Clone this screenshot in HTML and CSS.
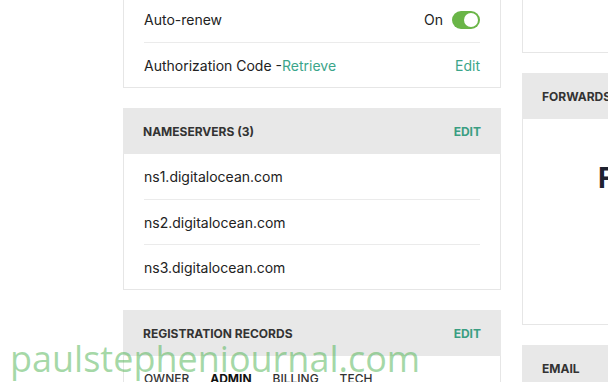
FILE: index.html
```html
<!DOCTYPE html>
<html lang="en">
<head>
  <meta charset="UTF-8">
  <meta name="viewport" content="width=device-width, initial-scale=1.0">
  <title>Domain Settings</title>
  <link rel="stylesheet" href="styles.css">
</head>
<body>
  <div class="page">
    <div class="column">
      <!-- Settings -->
      <div class="card">
        <div class="row">
          <span>Auto-renew</span>
          <span class="toggle-wrap">On <span class="toggle"><span class="knob"></span></span></span>
        </div>
        <div class="row">
          <span>Authorization Code -<a class="link" href="#">Retrieve</a></span>
          <a class="link" href="#">Edit</a>
        </div>
      </div>

      <!-- Nameservers -->
      <div class="card">
        <div class="card-header">
          <span>Nameservers (3)</span>
          <a class="header-link" href="#">Edit</a>
        </div>
        <div class="row">ns1.digitalocean.com</div>
        <div class="row">ns2.digitalocean.com</div>
        <div class="row">ns3.digitalocean.com</div>
      </div>

      <!-- Registration records -->
      <div class="card">
        <div class="card-header">
          <span>Registration Records</span>
          <a class="header-link" href="#">Edit</a>
        </div>
        <div class="tabs">
          <span class="tab">Owner</span>
          <span class="tab active">Admin</span>
          <span class="tab">Billing</span>
          <span class="tab">Tech</span>
        </div>
      </div>
    </div>

    <div class="column">
      <div class="card blank"></div>

      <div class="card">
        <div class="card-header">
          <span>Forwards</span>
        </div>
        <div class="forwards-body">
          <h2 class="big-title">Free Forwarding</h2>
        </div>
      </div>

      <div class="card">
        <div class="card-header">
          <span>Email</span>
        </div>
        <div class="forwards-body short"></div>
      </div>
    </div>
  </div>

  <div class="watermark">paulstepheniournal.com</div>
</body>
</html>
```

FILE: styles.css
```css
body {
  margin: 0;
  padding: 0;
  background: #ffffff;
  font-family: 'Inter', 'Roboto', sans-serif;
  color: #222;
  overflow: hidden;
  position: relative;
  height: 100vh;
}

.page {
  display: flex;
  gap: 21px;
  padding-left: 123px;
  margin-top: -4px;
}

.column {
  width: 378px;
  flex-shrink: 0;
  display: flex;
  flex-direction: column;
  gap: 20px;
}

.card {
  border: 1px solid #e6e6e6;
  background: #fff;
}

.card.blank {
  height: 55px;
}

.row {
  height: 45px;
  box-sizing: border-box;
  margin: 0 20px;
  display: flex;
  align-items: center;
  justify-content: space-between;
  font-size: 14px;
  color: #222;
}

.row + .row {
  border-top: 1px solid #ebebeb;
}

.link {
  color: #3ba58a;
  text-decoration: none;
}

.toggle-wrap {
  display: flex;
  align-items: center;
  gap: 9px;
}

.toggle {
  width: 28px;
  height: 18px;
  border-radius: 9px;
  background: #6ab547;
  display: flex;
  align-items: center;
  justify-content: flex-end;
  padding: 0 2px;
  box-sizing: border-box;
}

.knob {
  width: 14px;
  height: 14px;
  border-radius: 50%;
  background: #fff;
}

.card-header {
  height: 45px;
  background: #e8e8e8;
  padding: 0 20px;
  display: flex;
  align-items: center;
  justify-content: space-between;
  font-size: 12px;
  font-weight: 700;
  text-transform: uppercase;
  color: #333;
  margin: -1px -1px 0;
  border-top: 1px solid #e8e8e8;
}

.header-link {
  color: #3a9e82;
  text-decoration: none;
}

.tabs {
  display: flex;
  gap: 21px;
  padding: 15px 20px 20px;
  font-size: 12px;
  font-weight: 500;
  text-transform: uppercase;
  color: #333;
}

.tab.active {
  font-weight: 700;
  color: #111;
}

.forwards-body {
  height: 205px;
  padding: 42px 0 0 75px;
  box-sizing: border-box;
}

.forwards-body.short {
  height: 60px;
}

.big-title {
  margin: 0;
  font-size: 28px;
  font-weight: 700;
  color: #1e2230;
  white-space: nowrap;
}

.watermark {
  position: absolute;
  left: 10px;
  top: 334px;
  font-family: 'Open Sans', sans-serif;
  font-size: 36px;
  color: rgba(76, 178, 80, 0.5);
  white-space: nowrap;
  pointer-events: none;
}
```
